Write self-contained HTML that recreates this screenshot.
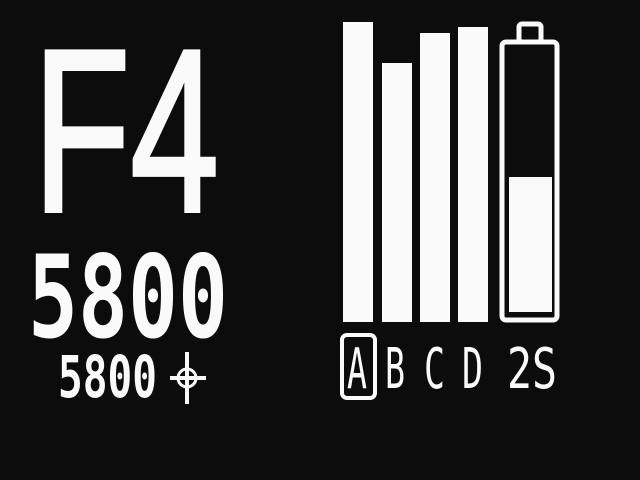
<!DOCTYPE html>
<html><head><meta charset="utf-8"><style>
html,body{margin:0;padding:0;background:#0c0c0c;width:640px;height:480px;overflow:hidden}
svg{display:block}
text{fill:#fafafa}
</style></head><body>
<svg width="640" height="480" viewBox="0 0 640 480" xmlns="http://www.w3.org/2000/svg">
<rect width="640" height="480" fill="#0c0c0c"/>
<text x="33" y="211" font-family="Liberation Sans, sans-serif" font-size="232" textLength="186" lengthAdjust="spacingAndGlyphs" stroke="#fafafa" stroke-width="4">F4</text>
<text x="28" y="337" font-family="DejaVu Sans Mono, monospace" font-weight="bold" font-size="114" textLength="200" lengthAdjust="spacingAndGlyphs">5800</text>
<text x="58" y="397" font-family="DejaVu Sans Mono, monospace" font-weight="bold" font-size="58" textLength="99" lengthAdjust="spacingAndGlyphs">5800</text>
<g fill="#fafafa">
<rect x="185" y="352" width="4" height="52"/>
<rect x="170" y="376" width="36" height="4"/>
</g>
<circle cx="187" cy="378" r="9" fill="none" stroke="#fafafa" stroke-width="3"/>
<g fill="#fafafa">
<rect x="343" y="22" width="30" height="300"/>
<rect x="382" y="63" width="30" height="259"/>
<rect x="420" y="33" width="30" height="289"/>
<rect x="458" y="27" width="30" height="295"/>
<rect x="509" y="177" width="43" height="135"/>
</g>
<rect x="502" y="42" width="55" height="278" rx="4" fill="none" stroke="#fafafa" stroke-width="5"/>
<rect x="519" y="24" width="22" height="18" rx="3" fill="none" stroke="#fafafa" stroke-width="5"/>
<rect x="342" y="335" width="33" height="63" rx="5" fill="none" stroke="#fafafa" stroke-width="4"/>
<g font-family="DejaVu Sans Mono, monospace" font-size="56">
<text x="347" y="388" textLength="20" lengthAdjust="spacingAndGlyphs">A</text>
<text x="385" y="388" textLength="20" lengthAdjust="spacingAndGlyphs">B</text>
<text x="424" y="388" textLength="21" lengthAdjust="spacingAndGlyphs">C</text>
<text x="462" y="388" textLength="21" lengthAdjust="spacingAndGlyphs">D</text>
<text x="507" y="388" textLength="50" lengthAdjust="spacingAndGlyphs">2S</text>
</g>
</svg>
</body></html>
